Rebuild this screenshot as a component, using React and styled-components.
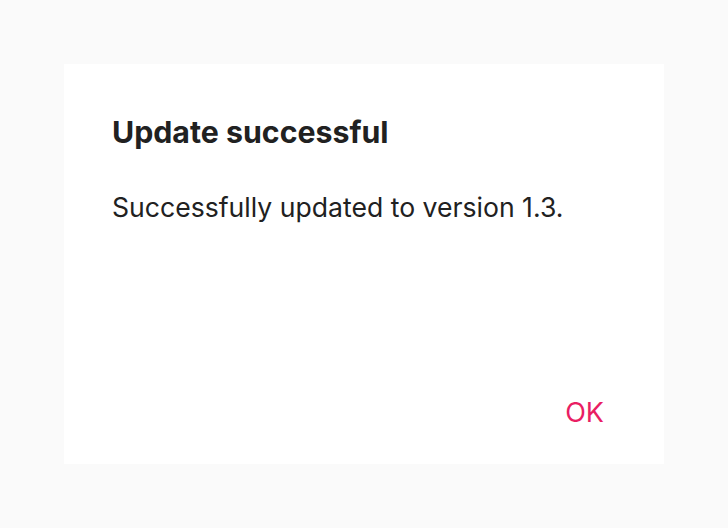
import styled, { createGlobalStyle } from "styled-components";

const GlobalStyle = createGlobalStyle`
  html, body {
    margin: 0;
    padding: 0;
    background: #fafafa;
    font-family: Inter, "Noto Sans", sans-serif;
  }
`;

const Page = styled.div`
  width: 728px;
  height: 528px;
  display: flex;
  align-items: center;
  justify-content: center;
`;

const Dialog = styled.div`
  width: 600px;
  height: 400px;
  box-sizing: border-box;
  background: #ffffff;
  padding: 48px 48px 25px 48px;
  display: flex;
  flex-direction: column;
`;

const Title = styled.h2`
  margin: 0;
  font-size: 30.3px;
  font-weight: 700;
  line-height: 40px;
  color: #212121;
`;

const Body = styled.p`
  margin: 37px 0 0;
  font-size: 26.6px;
  line-height: 36px;
  color: #212121;
  flex: 1;
`;

const Actions = styled.div`
  display: flex;
  justify-content: flex-end;
`;

const TextButton = styled.button`
  border: none;
  background: none;
  padding: 8px 12px;
  font-family: inherit;
  font-size: 27px;
  line-height: 36px;
  color: #e91e63;
  cursor: pointer;
`;

export default function App() {
  return (
    <>
      <GlobalStyle />
      <Page>
        <Dialog>
          <Title>Update successful</Title>
          <Body>Successfully updated to version 1.3.</Body>
          <Actions>
            <TextButton>OK</TextButton>
          </Actions>
        </Dialog>
      </Page>
    </>
  );
}
